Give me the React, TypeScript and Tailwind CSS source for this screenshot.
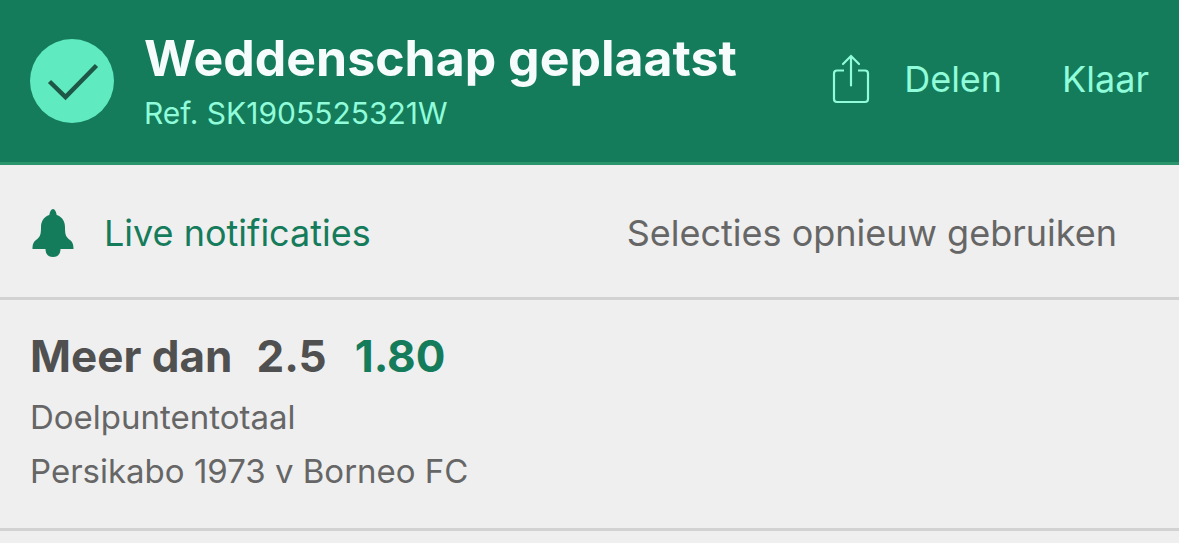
import React from "react";

function CheckBadge() {
  return (
    <svg className="size-[84px] shrink-0" viewBox="0 0 84 84" fill="none" aria-hidden="true">
      <circle cx="42" cy="42" r="42" fill="#60eac0" />
      <path d="M19.500 42.500L35.500 58L66.500 26.500" stroke="#1d5847" strokeWidth="4.500" />
    </svg>
  );
}

function ShareIcon() {
  return (
    <svg className="h-[50px] w-[38px]" viewBox="0 0 38 50" fill="none" stroke="#90fcd9" strokeWidth="2.200" aria-hidden="true">
      <path d="M12 16.500H5Q2 16.500 2 19.500V45Q2 48 5 48H33Q36 48 36 45V19.500Q36 16.500 33 16.500H26" />
      <path d="M19 31.500V2M11 10L19 2L27 10" strokeLinecap="round" />
    </svg>
  );
}

function BellIcon() {
  return (
    <svg className="h-12 w-[42px]" viewBox="0 0 42 48" fill="#147b5b" aria-hidden="true">
      <path d="M21 0C19 0 18 2.500 17.300 6C11.500 8 9 12.500 9 18.500C9 26 8 28 4 31C1.500 33 .5 35 .5 40H13.500C13.500 45 16 48 21 48S28.500 45 28.500 40H41.500C41.500 35 40.500 33 38 31C34 28 33 26 33 18.500C33 12.500 30.500 8 24.700 6C24 2.500 23 0 21 0Z" />
    </svg>
  );
}

export default function App() {
  return (
    <main className="min-h-screen bg-[#efefef] font-['Inter',sans-serif] text-[#666]">
      <header className="flex h-[165px] items-center justify-between border-b-3 border-[#2a956d] bg-[#147b5b] px-[30px]">
        <div className="flex items-center gap-[30px]">
          <CheckBadge />
          <div className="pt-1">
            <h1 className="text-[50px] leading-[60px] font-bold text-[#f5fcfb]">Weddenschap geplaatst</h1>
            <p className="text-[30px] leading-[50px] text-[#90fcd9]">Ref. SK1905525321W</p>
          </div>
        </div>
        <div className="flex items-center gap-[60px] pb-1 text-[36px] text-[#90fcd9]">
          <button className="flex items-center gap-[34px]"><ShareIcon />Delen</button>
          <button>Klaar</button>
        </div>
      </header>
      <div className="flex h-[135px] items-center justify-between border-b-3 border-[#d2d2d2] pt-1 pr-[62px] pl-8 text-[36px]">
        <button className="flex items-center gap-[30px] text-[#147b5b]"><BellIcon />Live notificaties</button>
        <button>Selecties opnieuw gebruiken</button>
      </div>
      <section className="h-[231px] border-b-3 border-[#d2d2d2] px-[30px] pt-[26px]">
        <h2 className="flex gap-7 text-[44px] leading-[60px] font-bold text-[#505050]">
          <span className="flex gap-6"><span>Meer dan</span><span>2.5</span></span>
          <span className="text-[#147b5b]">1.80</span>
        </h2>
        <p className="pt-1 text-[33px] leading-[54px]">Doelpuntentotaal</p>
        <p className="text-[33px] leading-[54px]">Persikabo 1973 v Borneo FC</p>
      </section>
    </main>
  );
}
